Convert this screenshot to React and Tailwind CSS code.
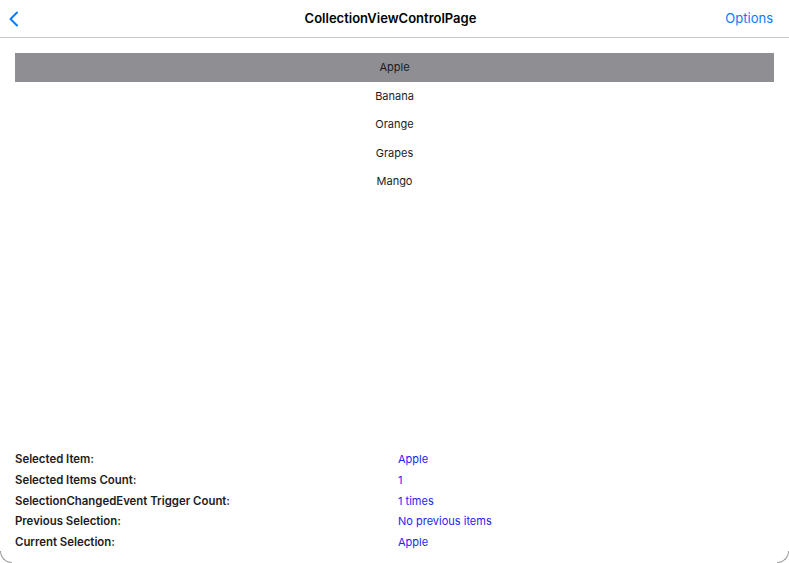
import { useState } from 'react'

const fruits = ['Apple', 'Banana', 'Orange', 'Grapes', 'Mango']

function InfoRow({ label, value }) {
  return (
    <div className="flex items-baseline leading-[20.8px]">
      <div className="w-[383px] text-[11.4px] font-semibold text-[#1c1c1e]">{label}</div>
      <div className="text-[11px] text-[#2323f8]">{value}</div>
    </div>
  )
}

export default function App() {
  const [selected, setSelected] = useState('Apple')

  return (
    <div className="relative flex h-[563px] w-[789px] flex-col overflow-hidden bg-white font-['Inter','Liberation_Sans',sans-serif]">
      <div className="flex h-[38px] shrink-0 items-center justify-between border-b border-[#c6c6c8] pl-[8px] pr-[16px]">
        <button className="flex w-[60px] items-center text-[#0a7aff]">
          <svg width="12" height="16" viewBox="0 0 12 16" fill="none">
            <path d="M9 1.5 L2.5 8 L9 14.5" stroke="currentColor" strokeWidth="2" strokeLinecap="round" strokeLinejoin="round" />
          </svg>
        </button>
        <h1 className="pt-[1px] text-[13px] font-semibold text-black">CollectionViewControlPage</h1>
        <button className="w-[60px] text-right text-[13px] text-[#0a7aff]">Options</button>
      </div>

      <div className="flex-1 px-[15px] pt-[15px]">
        {fruits.map(f => (
          <div
            key={f}
            onClick={() => setSelected(f)}
            className={`flex h-[28.5px] items-center justify-center text-[11px] text-[#1c1c1e] ${f === selected ? 'bg-[#8e8e93]' : ''}`}
          >
            {f}
          </div>
        ))}
      </div>

      <div className="shrink-0 px-[15px] pb-[10px]">
        <InfoRow label="Selected Item:" value={selected} />
        <InfoRow label="Selected Items Count:" value="1" />
        <InfoRow label="SelectionChangedEvent Trigger Count:" value="1 times" />
        <InfoRow label="Previous Selection:" value="No previous items" />
        <InfoRow label="Current Selection:" value={selected} />
      </div>

      <div className="absolute bottom-0 left-0 h-[12px] w-[12px] rounded-bl-[12px] border-b border-l border-[#9a9a9a]" />
      <div className="absolute bottom-0 right-0 h-[12px] w-[12px] rounded-br-[12px] border-b border-r border-[#9a9a9a]" />
    </div>
  )
}
